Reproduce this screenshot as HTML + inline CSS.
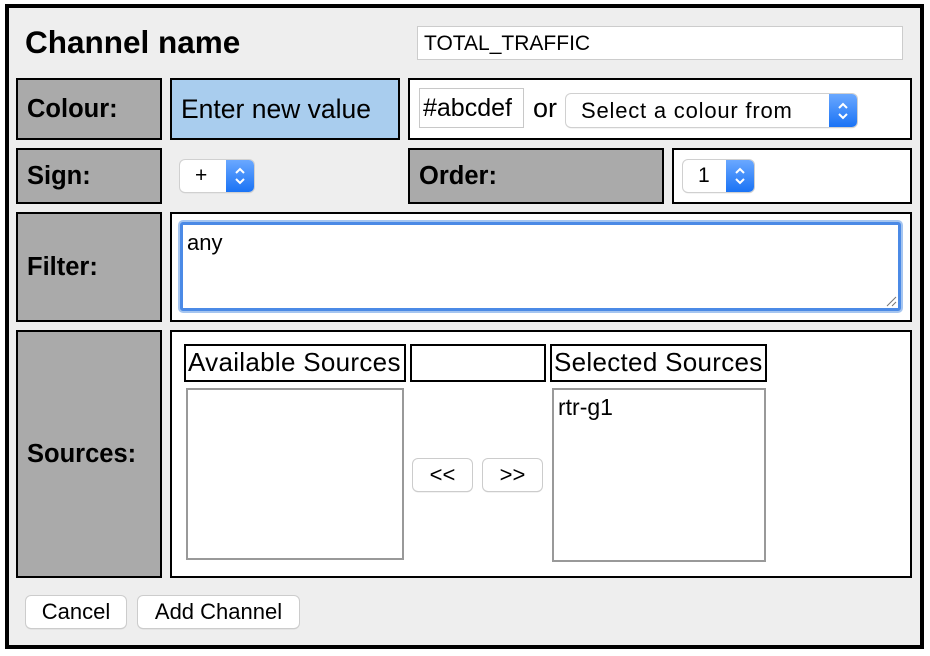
<!DOCTYPE html>
<html><head><style>
*{box-sizing:border-box;margin:0;padding:0}
body{width:930px;height:656px;background:#fff;font-family:"Liberation Sans",Arial,sans-serif;position:relative;overflow:hidden}
.a{position:absolute}
#frame{left:5px;top:4px;width:919px;height:645px;border:4px solid #000;background:#eeeeee}
.lab{background:#aaa;border:2px solid #000;font-weight:bold;font-size:25.5px;padding-left:9px;display:flex;align-items:center}
.cell{background:#fff;border:2px solid #000}
.sel{background:#fff;border-radius:5px;box-shadow:0 0 0 1px #d0d0d0,0 1px 1px #bbb;font-size:21px;display:flex;align-items:center;overflow:hidden;white-space:nowrap}
.sel .ar{position:absolute;right:0;top:0;bottom:0;width:28px;background:linear-gradient(#6aa8ff,#1a73f5);display:flex;align-items:center;justify-content:center}
.btn{background:#fff;border-radius:5px;box-shadow:0 0 0 1px #ccc,0 1px 1px #aaa;font-size:22px;display:flex;align-items:center;justify-content:center}
.hd{border:2px solid #000;background:#fff;font-size:26px;letter-spacing:0.3px;line-height:32px;padding-left:2px;white-space:nowrap;overflow:hidden}
.lb{border:2px solid #999;background:#fff}
</style></head><body>
<div id="frame" class="a"></div>
<div class="a" style="left:25px;top:24px;font-size:31.5px;font-weight:bold">Channel name</div>
<div class="a" style="left:417px;top:26px;width:486px;height:34px;background:#fff;border:1px solid #ccc;font-size:21px;padding:5px 0 0 6px">TOTAL_TRAFFIC</div>

<div class="a lab" style="left:16px;top:78px;width:146px;height:62px">Colour:</div>
<div class="a" style="left:170px;top:78px;width:230px;height:62px;background:#a9cdee;border:2px solid #000;font-size:26.5px;padding:14px 0 0 9px">Enter new value</div>
<div class="a cell" style="left:408px;top:78px;width:504px;height:62px"></div>
<div class="a" style="left:419px;top:88px;width:105px;height:40px;background:#fff;border:1px solid #c8c8c8;font-size:25px;padding:5px 0 0 3px;white-space:nowrap;overflow:hidden">#abcdef</div>
<div class="a" style="left:533px;top:93px;font-size:27px">or</div>
<div class="a sel" style="left:566px;top:94px;width:291px;height:33px;padding-left:15px;font-size:22px;letter-spacing:0.8px">Select a colour from<div class="ar"><svg width="14" height="22" viewBox="0 0 14 22"><path d="M3 8l4-4 4 4M3 14l4 4 4-4" fill="none" stroke="#fff" stroke-width="2"/></svg></div></div>

<div class="a lab" style="left:16px;top:148px;width:146px;height:56px">Sign:</div>
<div class="a sel" style="left:180px;top:160px;width:74px;height:32px;padding-left:15px">+<div class="ar"><svg width="14" height="22" viewBox="0 0 14 22"><path d="M3 8l4-4 4 4M3 14l4 4 4-4" fill="none" stroke="#fff" stroke-width="2"/></svg></div></div>
<div class="a lab" style="left:408px;top:148px;width:256px;height:56px">Order:</div>
<div class="a cell" style="left:672px;top:148px;width:240px;height:56px"></div>
<div class="a sel" style="left:683px;top:160px;width:71px;height:32px;padding-left:15px">1<div class="ar"><svg width="14" height="22" viewBox="0 0 14 22"><path d="M3 8l4-4 4 4M3 14l4 4 4-4" fill="none" stroke="#fff" stroke-width="2"/></svg></div></div>

<div class="a lab" style="left:16px;top:212px;width:146px;height:110px">Filter:</div>
<div class="a cell" style="left:170px;top:212px;width:742px;height:110px"></div>
<div class="a" style="left:180px;top:222px;width:721px;height:89px;background:#fff;border:3px solid #4b8ae6;box-shadow:0 0 0 2px #a5c5f0;border-radius:3px;font-size:22px;padding:5px 0 0 4px">any
<svg class="a" style="right:1px;bottom:1px" width="12" height="12"><path d="M11 2L2 11M11 7L7 11" stroke="#777" stroke-width="1"/></svg></div>

<div class="a lab" style="left:16px;top:330px;width:146px;height:248px">Sources:</div>
<div class="a cell" style="left:170px;top:330px;width:742px;height:248px"></div>
<div class="a hd" style="left:184px;top:344px;width:222px;height:38px">Available Sources</div>
<div class="a hd" style="left:410px;top:344px;width:136px;height:38px"></div>
<div class="a hd" style="left:550px;top:344px;width:217px;height:38px">Selected Sources</div>
<div class="a lb" style="left:186px;top:388px;width:218px;height:172px"></div>
<div class="a lb" style="left:552px;top:388px;width:214px;height:174px;font-size:23px;padding:4px 0 0 4px">rtr-g1</div>
<div class="a btn" style="left:413px;top:459px;width:59px;height:32px">&lt;&lt;</div>
<div class="a btn" style="left:483px;top:459px;width:59px;height:32px">&gt;&gt;</div>

<div class="a btn" style="left:26px;top:596px;width:100px;height:32px">Cancel</div>
<div class="a btn" style="left:138px;top:596px;width:161px;height:32px">Add Channel</div>
</body></html>
